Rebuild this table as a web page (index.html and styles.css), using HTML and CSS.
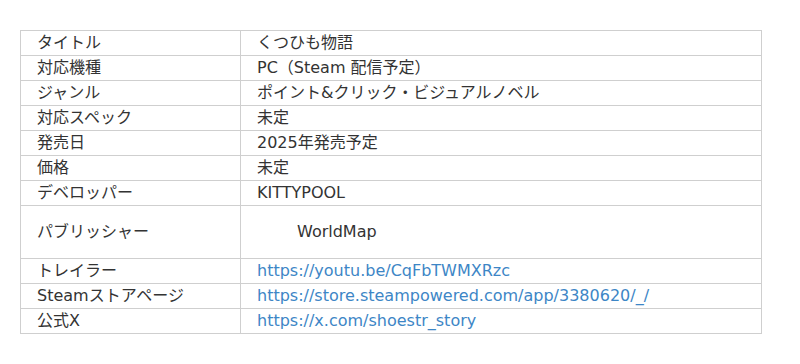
FILE: index.html
```html
<!DOCTYPE html>
<html lang="ja">
<head>
<meta charset="utf-8">
<link rel="stylesheet" href="styles.css">
</head>
<body>
<table class="spec">
  <tr><td class="k">タイトル</td><td class="v">くつひも物語</td></tr>
  <tr><td class="k">対応機種</td><td class="v">PC（Steam 配信予定）</td></tr>
  <tr><td class="k">ジャンル</td><td class="v">ポイント&amp;クリック・ビジュアルノベル</td></tr>
  <tr><td class="k">対応スペック</td><td class="v">未定</td></tr>
  <tr><td class="k">発売日</td><td class="v">2025年発売予定</td></tr>
  <tr><td class="k">価格</td><td class="v">未定</td></tr>
  <tr><td class="k">デベロッパー</td><td class="v">KITTYPOOL</td></tr>
  <tr class="tall"><td class="k">パブリッシャー</td><td class="v"><span class="pub">WorldMap</span></td></tr>
  <tr><td class="k">トレイラー</td><td class="v"><a href="#">https://youtu.be/CqFbTWMXRzc</a></td></tr>
  <tr><td class="k">Steamストアページ</td><td class="v"><a href="#">https://store.steampowered.com/app/3380620/_/</a></td></tr>
  <tr><td class="k">公式X</td><td class="v"><a href="#">https://x.com/shoestr_story</a></td></tr>
</table>
</body>
</html>
```
FILE: styles.css
```css
html, body {
  margin: 0;
  padding: 0;
  background: #fff;
}
body {
  padding: 30px 20px 0 20px;
  font-family: "DejaVu Sans", "Noto Sans CJK JP", sans-serif;
  font-size: 16px;
  color: #333;
}
.spec {
  border-collapse: collapse;
  width: 742px;
}
.spec td {
  border: 1px solid #cfcfcf;
  padding: 0 16px;
  height: 24px;
  line-height: 24px;
  vertical-align: middle;
  white-space: nowrap;
}
.spec td.k {
  width: 187px;
}
.spec tr.tall td {
  height: 52px;
}
.pub {
  padding-left: 40px;
}
.spec a {
  color: #3d86c6;
  text-decoration: none;
}
```
